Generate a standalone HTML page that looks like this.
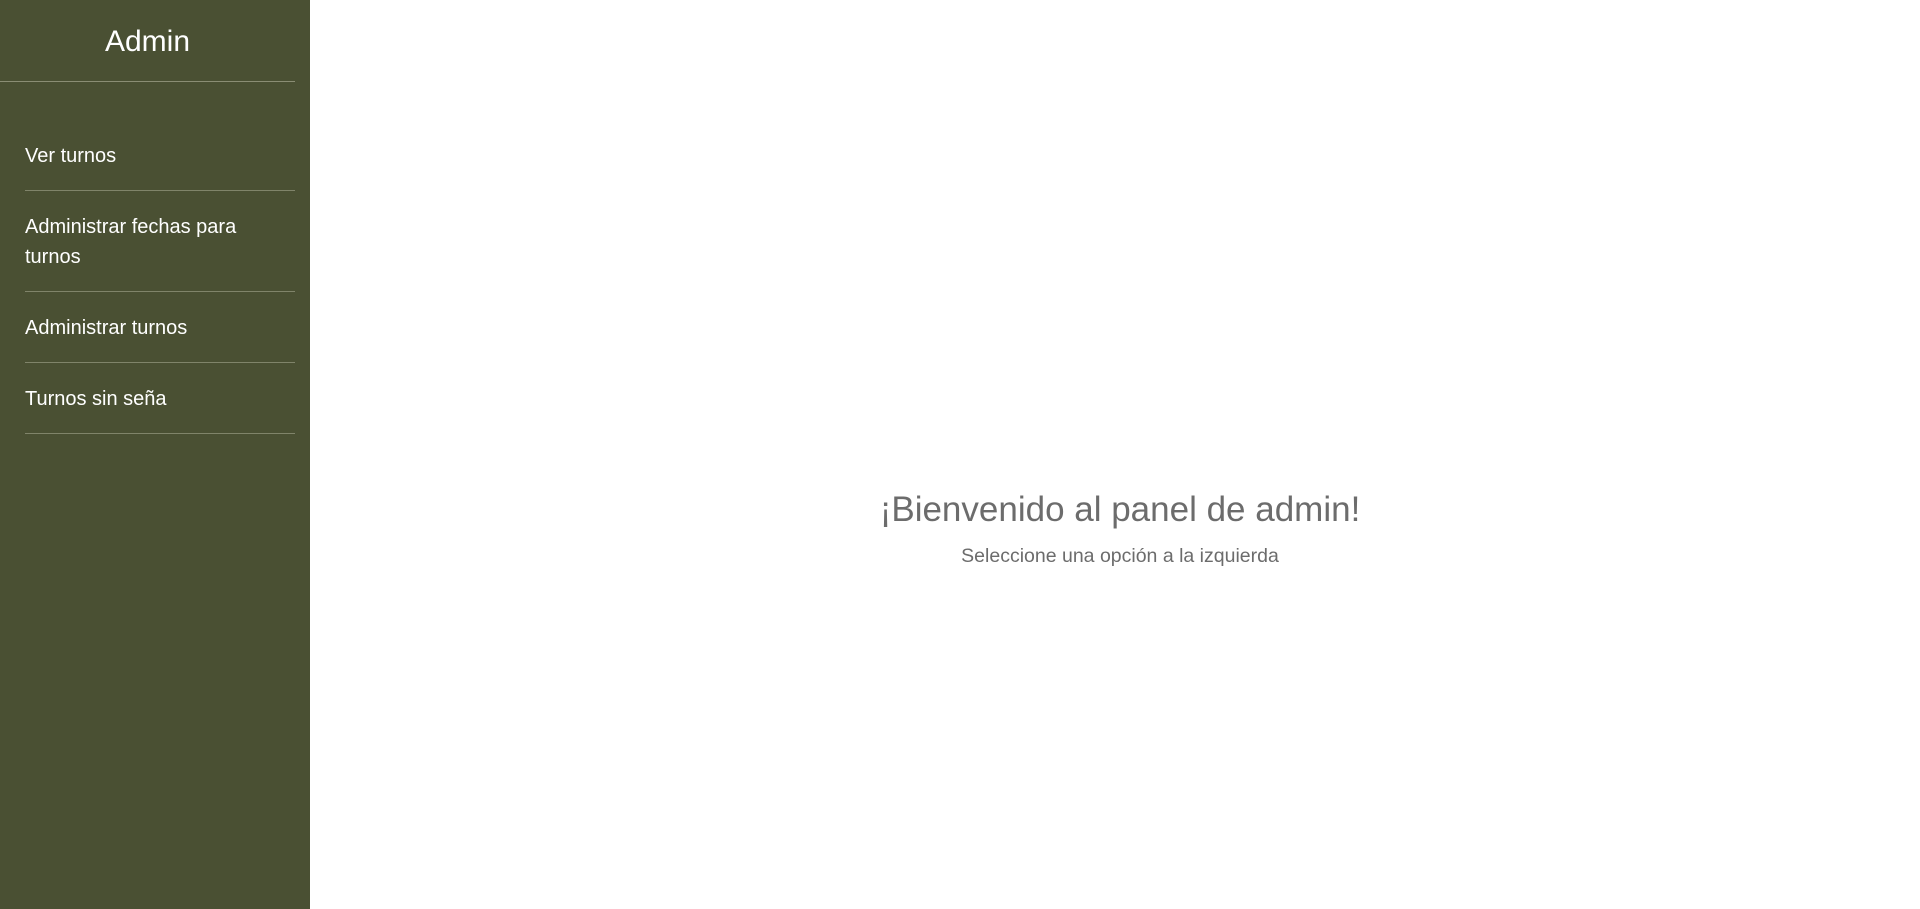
<!DOCTYPE html>
<html><head><meta charset="utf-8"><style>
html,body{margin:0;padding:0;width:1920px;height:909px;overflow:hidden;background:#fff;font-family:"Liberation Sans",sans-serif;}
.side{position:absolute;left:0;top:0;width:310px;height:909px;background:#4a5033;color:#fff;}
.title{position:absolute;left:0;width:295px;top:0;height:81px;border-bottom:1px solid #8a8d74;text-align:center;font-size:30px;line-height:84px;}
ul{list-style:none;margin:0;padding:0;position:absolute;left:25px;top:125px;width:270px;}
li{border-bottom:1px solid #80846a;font-size:20px;line-height:30px;padding:21px 0 19px;}
.main{position:absolute;left:320px;right:0;top:0;height:909px;text-align:center;color:#6c6c6c;}
h1{position:absolute;left:0;right:0;top:487px;margin:0;font-weight:400;font-size:35px;line-height:46px;}
p{position:absolute;left:0;right:0;top:543px;margin:0;font-size:19.5px;line-height:26px;}
</style></head><body>
<div class="side"><div class="title">Admin</div>
<ul><li style="padding:16px 0 19px">Ver turnos</li><li>Administrar fechas para<br>turnos</li><li>Administrar turnos</li><li>Turnos sin seña</li></ul></div>
<div class="main"><h1>¡Bienvenido al panel de admin!</h1><p>Seleccione una opción a la izquierda</p></div>
</body></html>
